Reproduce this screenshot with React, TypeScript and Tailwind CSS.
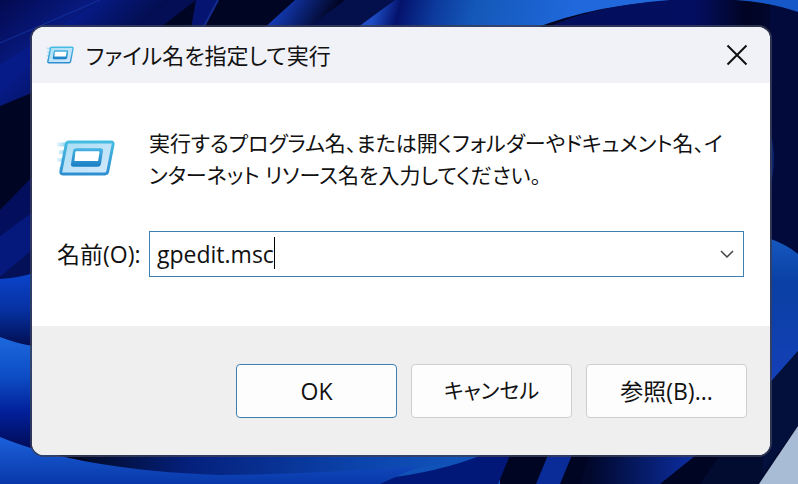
import { useState } from 'react'

function Wallpaper() {
  return (
    <svg
      className="absolute inset-0 -z-10 h-full w-full"
      viewBox="0 0 798 484"
      preserveAspectRatio="none"
      aria-hidden="true"
    >
      <defs>
        <linearGradient id="petalLeft" x1="0" y1="0" x2="0" y2="1">
          <stop offset="0" stopColor="#0a44cc" />
          <stop offset="0.5" stopColor="#06309f" />
          <stop offset="1" stopColor="#020a48" />
        </linearGradient>
        <linearGradient id="petalLow" x1="0" y1="0" x2="0" y2="1">
          <stop offset="0" stopColor="#1c68dc" />
          <stop offset="0.35" stopColor="#0d4cc4" />
          <stop offset="0.65" stopColor="#02209a" />
          <stop offset="1" stopColor="#010a50" />
        </linearGradient>
        <linearGradient id="strandA" gradientUnits="userSpaceOnUse" x1="0" y1="0" x2="50" y2="60">
          <stop offset="0" stopColor="#030a50" />
          <stop offset="1" stopColor="#0a1f90" />
        </linearGradient>
        <linearGradient id="strandB" gradientUnits="userSpaceOnUse" x1="70" y1="20" x2="120" y2="70">
          <stop offset="0" stopColor="#061b88" />
          <stop offset="1" stopColor="#020a40" />
        </linearGradient>
        <linearGradient id="strandC" gradientUnits="userSpaceOnUse" x1="280" y1="10" x2="320" y2="34">
          <stop offset="0" stopColor="#1238b0" />
          <stop offset="1" stopColor="#010524" />
        </linearGradient>
        <linearGradient id="petalTop" gradientUnits="userSpaceOnUse" x1="375" y1="10" x2="560" y2="60">
          <stop offset="0" stopColor="#1d4cc4" />
          <stop offset="0.12" stopColor="#04126c" />
          <stop offset="0.3" stopColor="#0c3a9c" />
          <stop offset="0.5" stopColor="#1458b8" />
          <stop offset="1" stopColor="#2068dc" />
        </linearGradient>
        <linearGradient id="petalShade" x1="0" y1="0" x2="1" y2="0">
          <stop offset="0" stopColor="#03105c" />
          <stop offset="0.6" stopColor="#030e60" />
          <stop offset="0.8" stopColor="#010422" />
          <stop offset="1" stopColor="#010a3c" />
        </linearGradient>
        <linearGradient id="petalFloor" x1="0" y1="0" x2="1" y2="0">
          <stop offset="0" stopColor="#000618" />
          <stop offset="0.3" stopColor="#05207c" />
          <stop offset="0.7" stopColor="#0b44ac" />
          <stop offset="1" stopColor="#1458bc" />
        </linearGradient>
        <linearGradient id="floorRight" gradientUnits="userSpaceOnUse" x1="590" y1="0" x2="690" y2="0">
          <stop offset="0" stopColor="#01082c" />
          <stop offset="1" stopColor="#0b2c9c" />
        </linearGradient>
        <linearGradient id="petalRight" x1="0" y1="0" x2="0" y2="1">
          <stop offset="0" stopColor="#1558c0" />
          <stop offset="0.3" stopColor="#0a40a4" />
          <stop offset="1" stopColor="#1440b8" />
        </linearGradient>
        <linearGradient id="wave" x1="0" y1="0" x2="0" y2="1">
          <stop offset="0" stopColor="#1c60dc" />
          <stop offset="1" stopColor="#0838a8" />
        </linearGradient>
      </defs>
      <rect width="798" height="484" fill="#010524" />
      {/* top strands */}
      <path d="M0 0H100L0 64V106Z" fill="url(#strandA)" />
      <path d="M100 0H170L125 38 34 92 0 106V64Z" fill="url(#strandB)" />
      <path d="M100 0 0 43" stroke="#12309c" strokeWidth="1" />
      <path d="M170 0H196L152 34H122Z" fill="#030e54" />
      <path d="M196 0H218L200 34H190Z" fill="#051470" />
      <path d="M218 0 202 30" stroke="#142c90" strokeWidth="2" />
      <path d="M295 0H345L310 30H262Z" fill="url(#strandC)" />
      <path d="M345 0H395L360 30H305Z" fill="#03104c" />
      <path d="M395 0H690Q600 2 530 30H354Z" fill="url(#petalTop)" />
      <path d="M542 30Q590 6 670 0H735L798 12V30Z" fill="url(#petalShade)" />
      {/* left petals */}
      <path d="M0 210 34 175V212L0 236Z" fill="#030e5c" />
      <path d="M0 236 34 211V250L0 277Z" fill="#05187c" />
      <path d="M0 277 34 248V290H0Z" fill="#041058" />
      <path d="M0 279Q18 278 34 273V350H0Z" fill="url(#petalLeft)" />
      <path d="M0 337Q18 344 34 346V452H0Z" fill="url(#petalLow)" />
      {/* floor */}
      <path d="M60 452H490L400 484H160Z" fill="url(#petalFloor)" />
      <path d="M150 472Q300 482 400 472L480 455H500V484H150Z" fill="#1052b8" />
      <path d="M380 479Q440 472 482 455H510L498 484H370Z" fill="#021878" />
      <path d="M0 437Q80 470 220 475 320 474 420 466L400 475 380 484H0Z" fill="url(#wave)" />
      <path d="M548 455H572L560 484H536Z" fill="#0a2c98" />
      <path d="M590 455H696L660 484H580Z" fill="url(#floorRight)" />
      <path d="M720 455H798V484H700Z" fill="#020c30" />
      {/* right petals */}
      <path d="M770 0H798V255H770Z" fill="#020a3c" />
      <path d="M735 0H798V12Q770 2 735 0Z" fill="#1658c8" />
      <path d="M768 125Q780 158 768 195Z" fill="#0a2470" />
      <path d="M768 238Q786 244 798 254V351L768 385Z" fill="url(#petalRight)" />
      <path d="M768 385 798 352V426L762 475Z" fill="#04103c" />
      <path d="M798 426V484H759Z" fill="#a9bcd6" />
    </svg>
  )
}

function RunIcon({ className }: { className: string }) {
  return (
    <svg className={className} viewBox="0 0 60 38" fill="none" aria-hidden="true">
      <defs>
        <linearGradient id="runFrame" x1="0" y1="0" x2="0" y2="1">
          <stop offset="0" stopColor="#45bce2" />
          <stop offset="1" stopColor="#2e8fd0" />
        </linearGradient>
        <linearGradient id="runFill" x1="0" y1="0" x2="1" y2="1">
          <stop offset="0" stopColor="#a8def4" />
          <stop offset="1" stopColor="#d4e8fc" />
        </linearGradient>
        <linearGradient id="runInner" x1="0" y1="0" x2="0" y2="1">
          <stop offset="0" stopColor="#48b4e4" />
          <stop offset="1" stopColor="#1b7fc4" />
        </linearGradient>
        <linearGradient id="runTrail" gradientUnits="userSpaceOnUse" x1="0" y1="0" x2="10" y2="0">
          <stop offset="0" stopColor="#a6def4" stopOpacity="0.3" />
          <stop offset="1" stopColor="#7ccbec" />
        </linearGradient>
      </defs>
      <path d="M0 3H11V7H0ZM2 11H9V15H2ZM0 19H8V23H0ZM2 28H6V32H2Z" fill="url(#runTrail)" />
      <path
        d="M12 2.500H56Q58.500 2.500 58 5L52.500 33Q52 35.500 49.500 35.500H6Q3.500 35.500 4 33L9.500 5Q10 2.500 12 2.500Z"
        fill="url(#runFill)"
        stroke="url(#runFrame)"
        strokeWidth="3"
      />
      <path
        d="M20 9H45Q48 9 47.500 12L45.500 25Q45 28 42 28H17Q14 28 14.500 25L16.500 12Q17 9 20 9Z"
        fill="url(#runInner)"
      />
      <path d="M20 12H43Q44 12 44 13L42.500 22H18L19 13Q19 12 20 12Z" fill="#fff" />
    </svg>
  )
}

function App() {
  const [name, setName] = useState('gpedit.msc')

  return (
    <div className="relative isolate flex min-h-screen flex-col overflow-hidden pt-[27px] pr-7 pb-[29px] pl-8 font-['Open_Sans','Noto_Sans_CJK_JP',sans-serif] text-[22px] text-[#111] [font-feature-settings:'palt']">
      <Wallpaper />
      <section
        role="dialog"
        aria-labelledby="run-title"
        className="flex flex-1 flex-col overflow-hidden rounded-xl bg-white ring-2 ring-[#3a3f58]/80"
      >
        <header className="flex h-14 items-center bg-[#f1f2f8] pr-[22px] pl-[14px]">
          <RunIcon className="h-5 w-7" />
          <h1 id="run-title" className="ml-3 flex-1">
            ファイル名を指定して実行
          </h1>
          <button type="button" aria-label="閉じる">
            <svg className="size-[22px]" viewBox="0 0 22 22" aria-hidden="true">
              <path d="M1.500 1.500 20.500 20.500M20.500 1.500 1.500 20.500" stroke="#111" strokeWidth="2" />
            </svg>
          </button>
        </header>

        <div className="grid flex-1 grid-cols-[92px_minmax(0,1fr)] content-start gap-y-10 pt-11 pr-[26px] pl-[25px]">
          <RunIcon className="mt-3 h-[38px] w-[58px]" />
          <p className="text-[21px] leading-8 whitespace-nowrap">
            実行するプログラム名、または開くフォルダーやドキュメント名、イ
            <br />
            ンターネット リソース名を入力してください。
          </p>
          <label htmlFor="run-name" className="self-center text-[23px] whitespace-nowrap">
            名前(O):
          </label>
          <div className="relative flex h-[46px] items-center border border-[#3c7fb1] pr-2">
            <input
              id="run-name"
              type="text"
              value={name}
              onChange={(e) => setName(e.target.value)}
              className="h-full min-w-0 flex-1 pl-[7px] text-[23px] outline-none"
            />
            <span className="absolute top-[5px] left-[124px] h-8 w-px bg-black" />
            <button type="button" aria-label="履歴">
              <svg className="h-4 w-4" viewBox="0 0 16 16" fill="none" aria-hidden="true">
                <path d="M2 5 8 11 14 5" stroke="#444" strokeWidth="1.500" />
              </svg>
            </button>
          </div>
        </div>

        <footer className="flex justify-end gap-[14px] bg-[#efefef] pt-[38px] pr-[23px] pb-[37px]">
          <button type="button" className="h-[54px] w-[161px] rounded border border-[#3c7fb1] bg-[#fdfdfd] text-[23px]">
            OK
          </button>
          <button type="button" className="h-[54px] w-[161px] rounded border border-[#ccced0] bg-[#fdfdfd] text-[21px]">
            キャンセル
          </button>
          <button type="button" className="h-[54px] w-[161px] rounded border border-[#ccced0] bg-[#fdfdfd] text-[23px]">
            参照(B)...
          </button>
        </footer>
      </section>
    </div>
  )
}

export default App
